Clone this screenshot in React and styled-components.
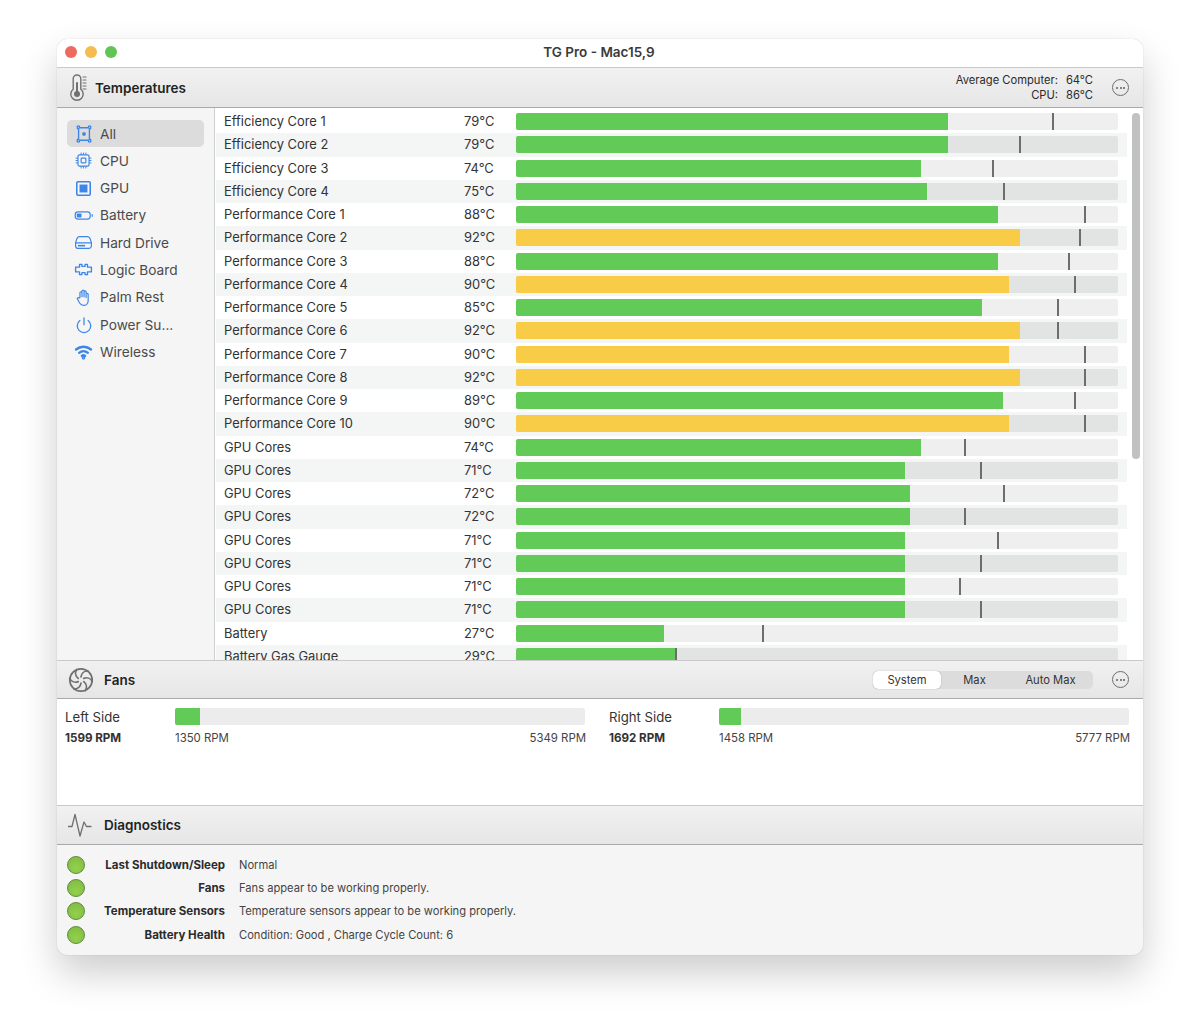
import React from "react";
import styled, { createGlobalStyle } from "styled-components";

const GlobalStyle = createGlobalStyle`
  html, body {
    margin: 0;
    background: #fff;
  }
  body {
    font-family: Inter, "Liberation Sans", sans-serif;
    color: #2b2b2b;
  }
`;

const Page = styled.div`
  width: 1200px;
  height: 1030px;
  padding: 39px 57px 0;
  box-sizing: border-box;
`;
const Win = styled.div`
  width: 1086px;
  height: 916px;
  border-radius: 11px;
  overflow: hidden;
  background: #f5f5f5;
  box-shadow: 0 0 1px rgba(0, 0, 0, 0.3), 0 18px 38px rgba(0, 0, 0, 0.2);
  display: flex;
  flex-direction: column;
`;
const TitleBar = styled.div`
  height: 28px;
  flex: none;
  box-sizing: border-box;
  padding: 0 2px 2px 0;
  background: #fff;
  display: flex;
  align-items: center;
  justify-content: center;
  position: relative;
  font-size: 13.5px;
  font-weight: 600;
  color: #3a3a3a;
`;
const Lights = styled.div`
  position: absolute;
  left: 8px;
  top: 7px;
  display: flex;
  gap: 8px;
`;
const Light = styled.span`
  width: 12px;
  height: 12px;
  border-radius: 50%;
  background: ${(p) => p.$color};
`;
const Header = styled.div`
  height: ${(p) => p.$height}px;
  flex: none;
  box-sizing: border-box;
  border-top: 1px solid #c9c9c9;
  border-bottom: 1px solid #a9a9a9;
  background: linear-gradient(#f1f1f1, #e6e6e6);
  display: flex;
  align-items: center;
  padding: 0 14px 0 9px;
`;
const HeaderIcon = styled.div`
  width: 30px;
  height: 30px;
  flex: none;
  display: flex;
  align-items: center;
  justify-content: center;
  color: #707070;
`;
const HeaderTitle = styled.div`
  font-size: 13.5px;
  font-weight: 600;
  color: #222;
  margin-left: ${(p) => p.$gap}px;
`;
const HeaderRight = styled.div`
  margin-left: auto;
  display: flex;
  align-items: center;
  gap: 19px;
`;
const Averages = styled.div`
  display: grid;
  grid-template-columns: auto 28px;
  column-gap: 7px;
  font-size: 11.2px;
  line-height: 15px;
  color: #2b2b2b;
  text-align: right;
`;
const More = styled.div`
  width: 17px;
  height: 17px;
  box-sizing: border-box;
  border: 1.2px solid #6e6e6e;
  border-radius: 50%;
  display: flex;
  align-items: center;
  justify-content: center;
  gap: 1.6px;
  & > span {
    width: 2px;
    height: 2px;
    border-radius: 50%;
    background: #5f5f5f;
  }
`;
const Main = styled.div`
  height: 552px;
  flex: none;
  display: flex;
`;
const Sidebar = styled.div`
  width: 158px;
  flex: none;
  box-sizing: border-box;
  padding: 12px 10px 0 10px;
  background: #f5f5f5;
  border-right: 1px solid #cfcfcf;
  display: flex;
  flex-direction: column;
  gap: 0.3px;
`;
const SideItem = styled.div`
  height: 27px;
  flex: none;
  border-radius: 5px;
  background: ${(p) => (p.$active ? "#dcdcdc" : "transparent")};
  display: flex;
  align-items: center;
  font-size: 13.7px;
  color: #4b4b4b;
`;
const SideIcon = styled.div`
  width: 33px;
  flex: none;
  display: flex;
  justify-content: center;
  color: #3d86e8;
`;
const Table = styled.div`
  flex: 1;
  min-width: 0;
  position: relative;
  overflow: hidden;
  background: #fff;
  padding-top: 2px;
`;
const Row = styled.div`
  height: 23.25px;
  margin-right: 16px;
  margin-left: 1px;
  box-sizing: border-box;
  padding-left: 8px;
  display: flex;
  align-items: center;
  background: ${(p) => (p.$odd ? "#f4f5f5" : "#fff")};
  font-size: 12.9px;
  color: #333;
`;
const RowName = styled.div`
  width: 240px;
  flex: none;
`;
const RowTemp = styled.div`
  width: 52px;
  flex: none;
`;
const Track = styled.div`
  position: relative;
  height: 17px;
  border-radius: 2px;
  overflow: hidden;
  background: ${(p) => (p.$odd ? "#e2e4e3" : "#efefef")};
  width: ${(p) => p.$width}px;
  flex: none;
`;
const Fill = styled.div`
  height: 100%;
  background: ${(p) => p.$color};
`;
const Marker = styled.div`
  position: absolute;
  top: 0;
  bottom: 0;
  width: 2px;
  background: #6d6d6d;
`;
const Thumb = styled.div`
  position: absolute;
  top: 5px;
  right: 3px;
  width: 8px;
  height: 346px;
  border-radius: 4px;
  background: #c1c1c1;
`;
const FanBody = styled.div`
  height: 106px;
  flex: none;
  background: #fff;
  box-sizing: border-box;
  padding: 9px 13px 0 8px;
  display: grid;
  grid-template-columns: 522px 522px;
  column-gap: 22px;
  align-content: start;
`;
const Fan = styled.div`
  display: grid;
  grid-template-columns: 110px 1fr;
  grid-template-rows: 17px 25px;
  align-items: center;
`;
const FanName = styled.div`
  font-size: 13.2px;
  color: #333;
`;
const FanTrack = styled(Track)`
  width: 410px;
  height: 17px;
  background: #ececec;
`;
const FanValue = styled.div`
  font-size: 11.6px;
  font-weight: 700;
  color: #333;
`;
const FanRange = styled.div`
  display: flex;
  justify-content: space-between;
  font-size: 11.4px;
  color: #444;
  margin-right: 1px;
`;
const Segments = styled.div`
  width: 220px;
  height: 18px;
  border-radius: 5px;
  background: #dcdcdc;
  display: grid;
  grid-template-columns: 68px 67px 1fr;
  font-size: 11.2px;
  color: #333;
`;
const Segment = styled.div`
  display: flex;
  align-items: center;
  justify-content: center;
  border-radius: 5px;
  background: ${(p) => (p.$active ? "#fff" : "transparent")};
  box-shadow: ${(p) => (p.$active ? "0 0 1px rgba(0,0,0,.45)" : "none")};
`;
const Diagnostics = styled.div`
  flex: 1;
  background: #f5f5f5;
  box-sizing: border-box;
  padding: 8px 0 0 10px;
  display: flex;
  flex-direction: column;
`;
const DiagRow = styled.div`
  height: 23.3px;
  display: flex;
  align-items: center;
  font-size: 11.15px;
  color: #444;
`;
const Dot = styled.div`
  width: 18px;
  height: 18px;
  flex: none;
  box-sizing: border-box;
  border-radius: 50%;
  border: 1px solid #5f8a3b;
  background: radial-gradient(circle at 50% 70%, #93d04f, #7ebb3f);
`;
const DiagLabel = styled.div`
  width: 140px;
  flex: none;
  text-align: right;
  font-size: 11.5px;
  font-weight: 700;
  color: #2b2b2b;
  margin-right: 14px;
`;

const Stroke = ({ size = 18, width = 1.5, children }) => (
  <svg width={size} height={size} viewBox="0 0 24 24" fill="none" stroke="currentColor" strokeWidth={width} strokeLinecap="round" strokeLinejoin="round">
    {children}
  </svg>
);

const icons = {
  all: (
    <Stroke size={20} width={1.6}>
      <path d="M4 2.5h2.5v2h11v-2H20v3h-1.5v13H20v3h-2.5v-2h-11v2H4v-3h1.5v-13H4z" />
      <rect x="10" y="10" width="4" height="4" rx="1" fill="currentColor" stroke="none" />
    </Stroke>
  ),
  cpu: (
    <Stroke size={19}>
      <rect x="5" y="5" width="14" height="14" rx="2" />
      <rect x="9" y="9" width="6" height="6" rx="1" />
      <path d="M9 2.5v2M12 2.5v2M15 2.5v2M9 19.5v2M12 19.5v2M15 19.5v2M2.5 9h2M2.5 12h2M2.5 15h2M19.5 9h2M19.5 12h2M19.5 15h2" strokeWidth="1.2" />
    </Stroke>
  ),
  gpu: (
    <Stroke size={19}>
      <rect x="3.5" y="3.5" width="17" height="17" rx="1.5" strokeWidth="2" />
      <rect x="7" y="7" width="10" height="10" fill="currentColor" stroke="none" />
    </Stroke>
  ),
  battery: (
    <Stroke size={19}>
      <rect x="1.5" y="7.5" width="19" height="9" rx="3.5" />
      <rect x="3.5" y="9.5" width="6" height="5" rx="1" fill="currentColor" stroke="none" />
      <path d="M23 11v2" />
    </Stroke>
  ),
  drive: (
    <Stroke size={19}>
      <path d="M7 4.5h10c2 0 3 1.5 3.5 3l1.5 5V16a3.5 3.5 0 0 1-3.5 3.5h-13A3.5 3.5 0 0 1 2 16v-3.5l1.500-5C4 6 5 4.5 7 4.5z" />
      <path d="M2.5 12.5h19" />
      <rect x="5" y="15" width="9" height="2" fill="currentColor" stroke="none" />
    </Stroke>
  ),
  board: (
    <Stroke size={19} width={1.7}>
      <path d="M7 5.5h3V8h4V5.500h3v3.500h5v6h-5v3.500h-3V16h-4v2.500H7V15H2V9h5z" />
    </Stroke>
  ),
  palm: (
    <Stroke size={19}>
      <path d="M7.5 12V6a1.3 1.3 0 0 1 2.6 0v5V3.800a1.3 1.3 0 0 1 2.6 0V11V5a1.3 1.3 0 0 1 2.600 0v7V8a1.3 1.3 0 0 1 2.6 0v8c0 3.3-2.5 6-5.8 6-2.5 0-4-1.2-5-3l-2.8-5c-.8-1.5 1.2-2.6 2.2-1.3z" />
    </Stroke>
  ),
  power: (
    <Stroke size={18} width={1.7}>
      <path d="M12 2.500v9" />
      <path d="M6.500 6a9 9 0 1 0 11 0" />
    </Stroke>
  ),
  wifi: (
    <Stroke size={19} width={3}>
      <path d="M2.5 9.5a14.500 14.500 0 0 1 19 0" />
      <path d="M6.5 13.700a8.500 8.500 0 0 1 11 0" />
      <path d="M10 17.500a3 3 0 0 1 4 0" />
      <circle cx="12" cy="20" r="0.8" fill="currentColor" />
    </Stroke>
  ),
};

const Thermometer = () => (
  <svg width="24" height="30" viewBox="0 0 24 30" fill="none" stroke="currentColor" strokeLinecap="round">
    <path d="M4.2 5.8a3.8 3.8 0 0 1 7.6 0V16.2a6.2 6.2 0 1 1-7.6 0z" strokeWidth="1.4" />
    <circle cx="8" cy="21" r="3" fill="currentColor" stroke="none" />
    <path d="M8 21V10" strokeWidth="2" />
    <path d="M14 4h3M14 7h3M14 10h3M14 13h3M14 16h3" strokeWidth="1.1" />
  </svg>
);

const FanIcon = () => (
  <svg width="26" height="26" viewBox="0 0 26 26" fill="none" stroke="currentColor" strokeWidth="1.7" strokeLinecap="round">
    <circle cx="13" cy="13" r="11.2" />
    {[0, 60, 120, 180, 240, 300].map((angle) => (
      <path key={angle} d="M13 9.8C13.5 6.5 16 3.8 20 4" transform={`rotate(${angle} 13 13)`} />
    ))}
  </svg>
);

const PulseIcon = () => (
  <svg width="26" height="24" viewBox="0 0 26 24" fill="none" stroke="currentColor" strokeWidth="1.3" strokeLinejoin="round" strokeLinecap="round">
    <path d="M0.5 13.5H4L7 1.5l5 21.5L16 9l2.500 4.500H23" />
  </svg>
);

const rows = [
  ["Efficiency Core 1", 79, 432, 537],
  ["Efficiency Core 2", 79, 432, 504],
  ["Efficiency Core 3", 74, 405, 477],
  ["Efficiency Core 4", 75, 411, 488],
  ["Performance Core 1", 88, 482, 569],
  ["Performance Core 2", 92, 504, 564],
  ["Performance Core 3", 88, 482, 553],
  ["Performance Core 4", 90, 493, 559],
  ["Performance Core 5", 85, 466, 542],
  ["Performance Core 6", 92, 504, 542],
  ["Performance Core 7", 90, 493, 569],
  ["Performance Core 8", 92, 504, 569],
  ["Performance Core 9", 89, 487, 559],
  ["Performance Core 10", 90, 493, 569],
  ["GPU Cores", 74, 405, 449],
  ["GPU Cores", 71, 389, 465],
  ["GPU Cores", 72, 394, 488],
  ["GPU Cores", 72, 394, 449],
  ["GPU Cores", 71, 389, 482],
  ["GPU Cores", 71, 389, 465],
  ["GPU Cores", 71, 389, 444],
  ["GPU Cores", 71, 389, 465],
  ["Battery", 27, 148, 247],
  ["Battery Gas Gauge", 29, 160, 160],
];

const sideItems = [
  ["all", "All"],
  ["cpu", "CPU"],
  ["gpu", "GPU"],
  ["battery", "Battery"],
  ["drive", "Hard Drive"],
  ["board", "Logic Board"],
  ["palm", "Palm Rest"],
  ["power", "Power Su..."],
  ["wifi", "Wireless"],
];

const fans = [
  { name: "Left Side", rpm: "1599 RPM", min: "1350 RPM", max: "5349 RPM", fill: 25 },
  { name: "Right Side", rpm: "1692 RPM", min: "1458 RPM", max: "5777 RPM", fill: 22 },
];

const diagnostics = [
  ["Last Shutdown/Sleep", "Normal"],
  ["Fans", "Fans appear to be working properly."],
  ["Temperature Sensors", "Temperature sensors appear to be working properly."],
  ["Battery Health", "Condition: Good , Charge Cycle Count: 6"],
];

const MoreButton = () => (
  <More>
    <span />
    <span />
    <span />
  </More>
);

const App = () => {
  return (
    <Page>
      <GlobalStyle />
      <Win>
        <TitleBar>
          <Lights>
            <Light $color="#ee6a5f" />
            <Light $color="#f5bd4f" />
            <Light $color="#61c454" />
          </Lights>
          TG Pro - Mac15,9
        </TitleBar>
        <Header $height={41}>
          <HeaderIcon>
            <Thermometer />
          </HeaderIcon>
          <HeaderTitle $gap={-1}>Temperatures</HeaderTitle>
          <HeaderRight>
            <Averages>
              <span>Average Computer:</span>
              <span>64°C</span>
              <span>CPU:</span>
              <span>86°C</span>
            </Averages>
            <MoreButton />
          </HeaderRight>
        </Header>
        <Main>
          <Sidebar>
            {sideItems.map(([icon, label], i) => (
              <SideItem key={icon} $active={i === 0}>
                <SideIcon>{icons[icon]}</SideIcon>
                {label}
              </SideItem>
            ))}
          </Sidebar>
          <Table>
            {rows.map(([name, temp, fill, mark], i) => (
              <Row key={i} $odd={i % 2 === 1}>
                <RowName>{name}</RowName>
                <RowTemp>{temp}°C</RowTemp>
                <Track $width={602} $odd={i % 2 === 1}>
                  <Fill $color={temp >= 90 ? "#f8cc46" : "#62cb57"} style={{ width: fill }} />
                  <Marker style={{ left: mark - 1 }} />
                </Track>
              </Row>
            ))}
            <Thumb />
          </Table>
        </Main>
        <Header $height={39}>
          <HeaderIcon>
            <FanIcon />
          </HeaderIcon>
          <HeaderTitle $gap={8}>Fans</HeaderTitle>
          <HeaderRight>
            <Segments>
              <Segment $active>System</Segment>
              <Segment>Max</Segment>
              <Segment>Auto Max</Segment>
            </Segments>
            <MoreButton />
          </HeaderRight>
        </Header>
        <FanBody>
          {fans.map((fan) => (
            <Fan key={fan.name}>
              <FanName>{fan.name}</FanName>
              <FanTrack>
                <Fill $color="#62cb57" style={{ width: fan.fill }} />
              </FanTrack>
              <FanValue>{fan.rpm}</FanValue>
              <FanRange>
                <span>{fan.min}</span>
                <span>{fan.max}</span>
              </FanRange>
            </Fan>
          ))}
        </FanBody>
        <Header $height={40}>
          <HeaderIcon>
            <PulseIcon />
          </HeaderIcon>
          <HeaderTitle $gap={8}>Diagnostics</HeaderTitle>
        </Header>
        <Diagnostics>
          {diagnostics.map(([label, text]) => (
            <DiagRow key={label}>
              <Dot />
              <DiagLabel>{label}</DiagLabel>
              {text}
            </DiagRow>
          ))}
        </Diagnostics>
      </Win>
    </Page>
  );
};

export default App;
